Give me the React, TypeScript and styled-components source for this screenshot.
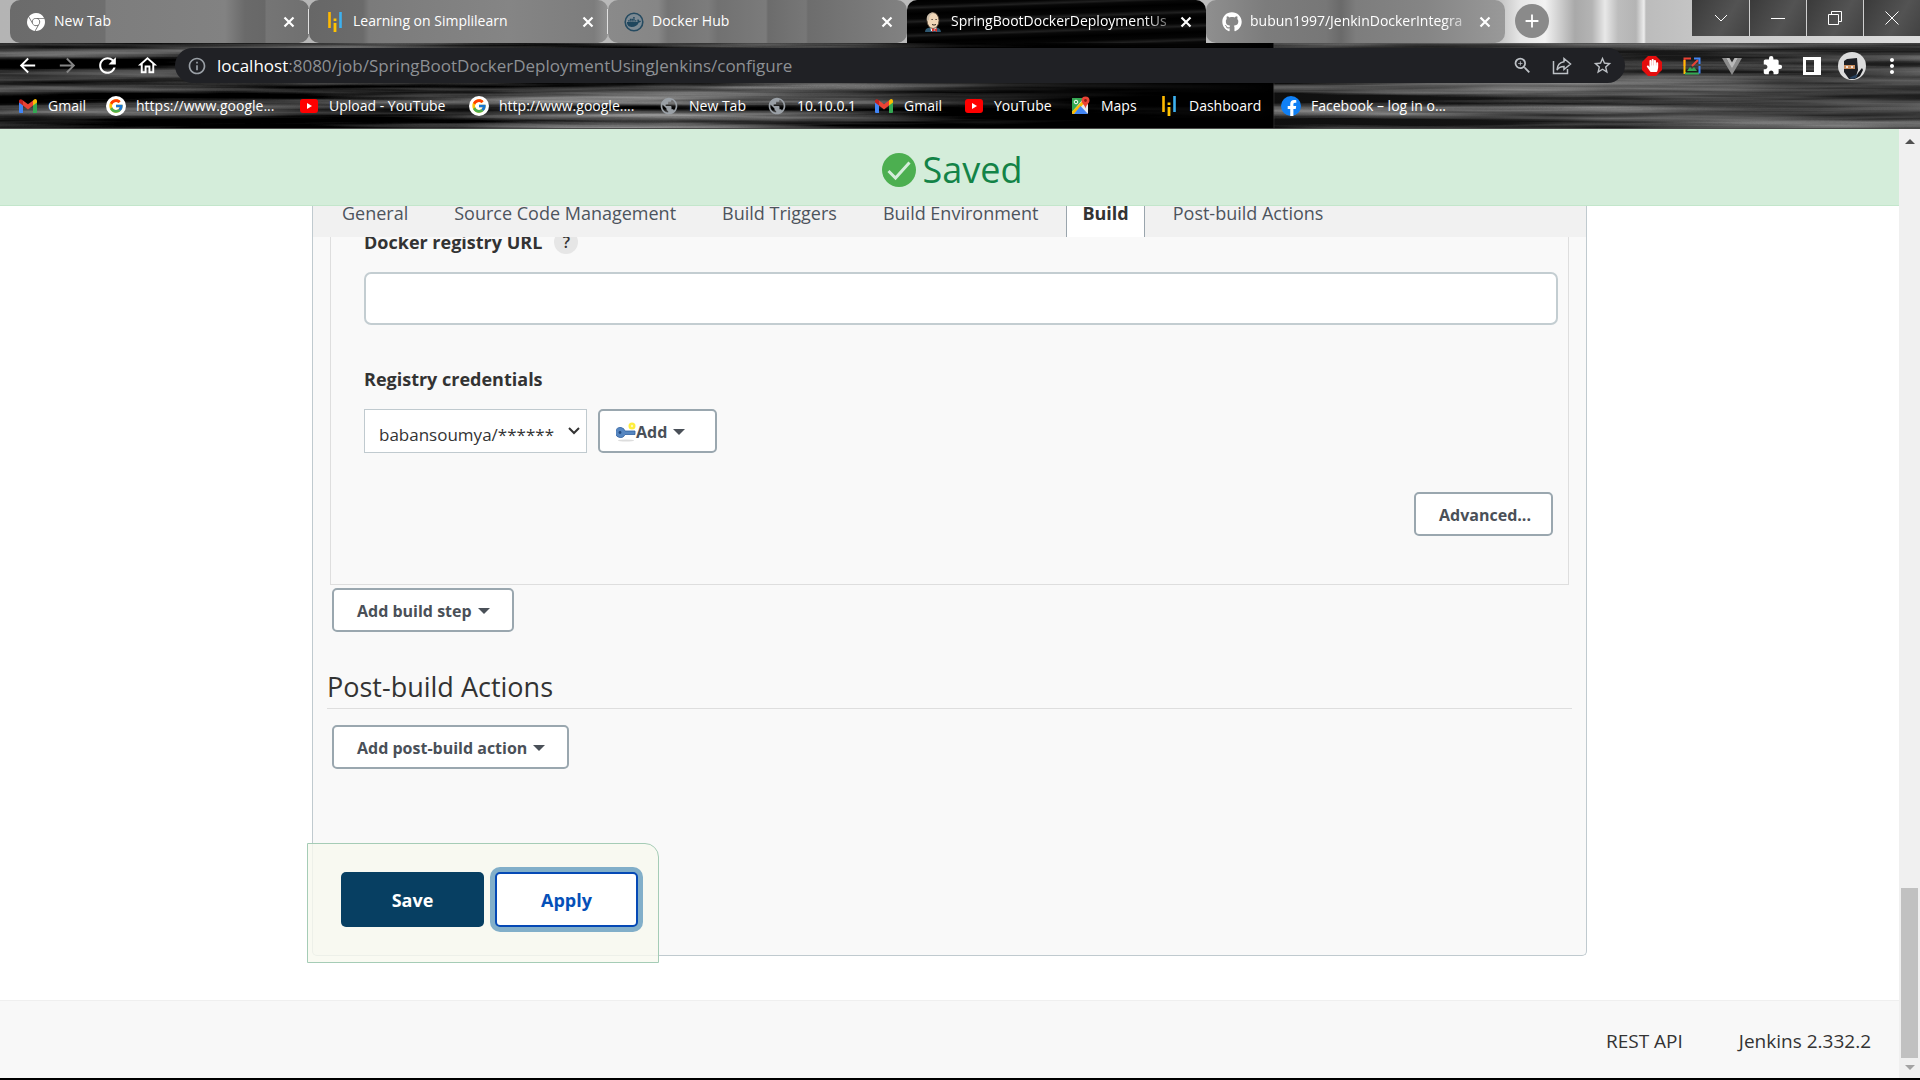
import React from 'react';
import styled, { createGlobalStyle } from 'styled-components';
import { FcGoogle } from 'react-icons/fc';
import { FaGithub, FaHandPaper, FaFacebookF, FaDocker } from 'react-icons/fa';
import { SiGooglechrome } from 'react-icons/si';
import {
  MdArrowBack,
  MdArrowForward,
  MdRefresh,
  MdOutlineHome,
  MdInfoOutline,
  MdZoomIn,
  MdStarOutline,
  MdExtension,
  MdMoreVert,
  MdPublic,
  MdAdd,
} from 'react-icons/md';

const GlobalStyle = createGlobalStyle`
  *, *::before, *::after { box-sizing: border-box; }
  body { margin: 0; background: #fff; }
  body, button, input, select {
    font-family: 'Open Sans', 'Noto Sans', 'Liberation Sans', sans-serif;
  }
  button { margin: 0; padding: 0; border: 0; background: none; color: inherit; cursor: pointer; }
  a { color: inherit; text-decoration: none; }
`;

const Window = styled.div`
  display: flex;
  flex-direction: column;
  min-height: 100vh;
  border-bottom: 2px solid #000;
`;

/* ---------- browser chrome ---------- */

const Chrome = styled.header`
  position: relative;
  isolation: isolate;
  height: 129px;
  overflow: hidden;
  color: #fff;
  background: #0a0a0a;
  border-bottom: 1px solid #4a4a4a;
`;

const Backdrop = styled.svg`
  position: absolute;
  inset: 0;
  z-index: -1;
  width: 100%;
  height: 100%;
`;

const TabStrip = styled.div`
  display: flex;
  height: 43px;
  padding-left: 10px;
  background: linear-gradient(90deg, #b4b4b4 0, #bdbdbd 1100px, #c4c4c4 1500px, #e6e6e6 1520px, #f2f2f2 1545px, #a9a9a9 1575px, #b4b4b4 1592px, #e8e8e8 1605px, #bdbdbd 1618px, #b4b4b4 1636px, #ededed 1644px, #bcbcbc 1646px, #c4c4c4 1690px, #dedede 100%);
`;

const Tab = styled.div<{ $tone: string; $active?: boolean; $divided?: boolean }>`
  position: relative;
  display: flex;
  align-items: center;
  flex: 0 1 299px;
  min-width: 0;
  height: 43px;
  padding: 0 12px 0 16px;
  border-radius: ${(p) => (p.$active ? '10px 10px 0 0' : '10px')};
  background: ${(p) => p.$tone};
  &::after {
    content: '';
    display: ${(p) => (p.$divided ? 'block' : 'none')};
    position: absolute;
    right: 0;
    top: 9px;
    width: 1px;
    height: 25px;
    background: #e0e0e0;
  }
`;

const TabIcon = styled.span`
  display: flex;
  flex: none;
  width: 20px;
  height: 20px;
  margin-right: 8px;
  align-items: center;
  justify-content: center;
`;

const TabLabel = styled.span<{ $fade?: boolean }>`
  flex: 1;
  min-width: 0;
  overflow: hidden;
  white-space: nowrap;
  font-size: 14px;
  line-height: 20px;
  padding-bottom: 1px;
  ${(p) => p.$fade && 'mask-image: linear-gradient(90deg, #000 85%, rgba(0, 0, 0, 0.15) 100%);'}
`;

const IconButton = styled.button<{ $w?: number; $color?: string }>`
  display: flex;
  flex: none;
  align-items: center;
  justify-content: center;
  width: ${(p) => p.$w ?? 40}px;
  height: 35px;
  color: ${(p) => p.$color ?? '#fff'};
`;

const NewTab = styled.button`
  display: flex;
  flex: none;
  align-items: center;
  justify-content: center;
  width: 34px;
  height: 34px;
  margin: 4px 0 0 10px;
  border-radius: 50%;
  background: #8a8a8a;
`;

const WindowButtons = styled.div`
  display: flex;
  margin-left: auto;
  height: 36px;
`;

const WindowButton = styled.button`
  width: 57px;
  height: 36px;
  display: flex;
  align-items: center;
  justify-content: center;
  background: linear-gradient(120deg, #3a3a3a, #535353 60%, #424242);
  & + & { border-left: 1px solid #cfcfcf; }
`;

const Toolbar = styled.div`
  display: flex;
  align-items: center;
  height: 40px;
  margin-top: 5px;
  padding: 0 8px 5px 7px;
`;

const Omnibox = styled.div`
  display: flex;
  align-items: center;
  flex: 1;
  height: 35px;
  margin-left: 8px;
  padding: 0 3px 0 12px;
  border-radius: 18px;
  background: #202125;
`;

const Address = styled.a`
  flex: 1;
  margin-left: 10px;
  font-size: 17px;
  line-height: 24px;
  color: #8d9094;
  b { font-weight: 400; color: #fff; }
`;

const Extensions = styled.div`
  display: flex;
  margin-left: 7px;
`;

const Bookmarks = styled.nav`
  display: flex;
  height: 36px;
  align-items: center;
  padding-left: 18px;
`;

const Bookmark = styled.a<{ $w: number }>`
  display: flex;
  flex: none;
  align-items: center;
  gap: 10px;
  width: ${(p) => p.$w}px;
  font-size: 14px;
  line-height: 20px;
  white-space: nowrap;
`;

/* ---------- page ---------- */

const Viewport = styled.div`
  display: flex;
  flex: 1;
`;

const Page = styled.div`
  display: flex;
  flex: 1;
  min-width: 0;
  flex-direction: column;
  color: #333;
`;

const Saved = styled.div`
  display: flex;
  align-items: center;
  justify-content: center;
  gap: 6px;
  height: 77px;
  padding: 6px 0 0 4px;
  border-bottom: 1px solid #c3e6cb;
  background: #d4edda;
  color: #138347;
  font-size: 36px;
  line-height: 48px;
`;

const Config = styled.main`
  position: relative;
  flex: 1;
  margin: 0 312px 44px;
  border: 1px solid #c0cacf;
  border-top: 0;
  border-radius: 0 0 5px 5px;
  background: #f9f9f9;
`;

const SectionTabs = styled.nav`
  position: relative;
  z-index: 1;
  display: flex;
  height: 31px;
  padding-left: 6px;
  background: #f1f1f1;
`;

const SectionTab = styled.a<{ $on?: boolean }>`
  height: 31px;
  padding: 0 ${(p) => (p.$on ? 15 : 23)}px;
  margin: 0 ${(p) => (p.$on ? 5 : 0)}px;
  font-size: 18px;
  line-height: 14px;
  white-space: nowrap;
  font-weight: ${(p) => (p.$on ? 700 : 400)};
  color: ${(p) => (p.$on ? '#333' : '#4d545d')};
  background: ${(p) => (p.$on ? '#fff' : 'transparent')};
  border: solid #9aa5ad;
  border-width: 0 ${(p) => (p.$on ? 1 : 0)}px;
`;

const Step = styled.section`
  margin: -12px 17px 0;
  padding: 4px 10px 48px 33px;
  border: 1px solid #dedede;
  border-top: 0;
`;

const LabelRow = styled.div`
  display: flex;
  align-items: center;
  gap: 12px;
  height: 26px;
`;

const Label = styled.label`
  font-size: 18px;
  line-height: 26px;
  font-weight: 700;
`;

const Help = styled.a`
  width: 24px;
  height: 24px;
  border-radius: 50%;
  background: #e6e6e6;
  text-align: center;
  font-size: 16px;
  line-height: 24px;
  font-weight: 600;
`;

const TextBox = styled.input`
  display: block;
  width: 100%;
  height: 53px;
  margin: 17px 0 41px;
  padding: 0 12px;
  border: 2px solid #c3cdd1;
  border-radius: 7px;
  background: #fff;
  font-size: 18px;
`;

const CredentialRow = styled.div`
  display: flex;
  gap: 11px;
  margin-top: 17px;
`;

const SelectWrap = styled.div`
  position: relative;
  svg { position: absolute; right: 6px; top: 17px; pointer-events: none; }
`;

const Select = styled.select`
  appearance: none;
  display: block;
  width: 223px;
  height: 44px;
  padding: 6px 24px 0 14px;
  border: 1px solid #c0cacf;
  border-radius: 0;
  background: #fff;
  color: #333;
  font-size: 17px;
`;

const Button = styled.button<{ $w: number; $lead?: boolean }>`
  display: flex;
  align-items: center;
  width: ${(p) => p.$w}px;
  height: 44px;
  padding: 2px 0 0 ${(p) => (p.$lead ? 16 : 23)}px;
  border: 2px solid #9aa7af;
  border-radius: 5px;
  background: #fff;
  color: #4a5058;
  font-size: 16px;
  line-height: 22px;
  font-weight: 700;
  white-space: nowrap;
`;

const Right = styled.div`
  display: flex;
  justify-content: flex-end;
  padding-right: 5px;
  margin-top: 39px;
`;

const Block = styled.section`
  padding: 3px 14px 0 19px;
`;

const Heading = styled.h2`
  margin: 36px 0 16px -5px;
  padding-bottom: 2px;
  border-bottom: 1px solid #dedede;
  font-size: 27px;
  line-height: 38px;
  font-weight: 400;
`;

const BottomBar = styled.div`
  position: absolute;
  left: -6px;
  bottom: -8px;
  display: flex;
  gap: 11px;
  width: 352px;
  height: 120px;
  padding: 28px 0 0 33px;
  border: 1px solid #a5ccb6;
  border-radius: 0 14px 0 0;
  background: rgba(247, 249, 239, 0.8);
`;

const FormButton = styled.button<{ $primary?: boolean }>`
  width: 143px;
  height: 55px;
  border-radius: 5px;
  font-size: 18px;
  line-height: 26px;
  font-weight: 700;
  color: ${(p) => (p.$primary ? '#fff' : '#0550b8')};
  background: ${(p) => (p.$primary ? '#073f62' : '#fff')};
  ${(p) => !p.$primary && 'border: 2px solid #0549b5; box-shadow: 0 0 0 5px #82afc9;'}
`;

const Footer = styled.footer`
  display: flex;
  align-items: center;
  justify-content: flex-end;
  gap: 56px;
  height: 78px;
  padding: 2px 28px 0;
  border-top: 1px solid #efefef;
  background: #f8f8f8;
  font-size: 19px;
  line-height: 24px;
`;

const Scrollbar = styled.div`
  display: flex;
  flex: none;
  flex-direction: column;
  align-items: center;
  justify-content: space-between;
  width: 21px;
  padding: 10px 0 7px;
  background: #f0f0f0;
`;

const Thumb = styled.div`
  width: 17px;
  height: 170px;
  margin: auto 0 7px;
  background: #c1c1c1;
`;

/* ---------- drawings ---------- */

const Grain = () => (
  <Backdrop aria-hidden="true">
    <defs>
      <filter id="grain" x="0" y="0" width="100%" height="100%" colorInterpolationFilters="sRGB">
        <feTurbulence type="fractalNoise" baseFrequency="0.0022 0.085" numOctaves={4} seed={11} />
        <feColorMatrix values="1.25 0 0 0 -0.44  1.25 0 0 0 -0.44  1.25 0 0 0 -0.44  0 0 0 0 1" />
      </filter>
      <linearGradient id="shade">
        <stop offset="0" stopColor="#000" stopOpacity=".25" />
        <stop offset=".3" stopColor="#000" stopOpacity="0" />
        <stop offset=".45" stopColor="#000" stopOpacity=".15" />
        <stop offset=".58" stopColor="#000" stopOpacity=".75" />
        <stop offset=".663" stopColor="#000" stopOpacity="1" />
        <stop offset=".664" stopColor="#666" stopOpacity=".15" />
        <stop offset="1" stopColor="#777" stopOpacity=".25" />
      </linearGradient>
    </defs>
    <rect width="100%" height="100%" filter="url(#grain)" />
    <rect width="100%" height="100%" fill="url(#shade)" />
  </Backdrop>
);

const CloseIcon = () => (
  <svg width="12" height="12" viewBox="0 0 12 12" stroke="#fff" strokeWidth="2.200">
    <path d="m1.500 1.500 9 9m0-9-9 9" />
  </svg>
);

const GmailIcon = () => (
  <svg width="20" height="16" viewBox="0 0 20 16">
    <path d="M1 3v11a1 1 0 0 0 1 1h3V7z" fill="#4285f4" />
    <path d="M19 3v11a1 1 0 0 1-1 1h-3V7z" fill="#34a853" />
    <path d="M15 2.5V7.6L19 4.500V3c0-2-2-2.600-3.200-1.200z" fill="#fbbc04" />
    <path d="M5 7.600V2.500L10 6.300l5-3.800v5.100L10 11.400z" fill="#ea4335" />
    <path d="M1 3v1.500L5 7.600V2.500L4.200 1.800C3 .5 1 1.200 1 3z" fill="#c5221f" />
  </svg>
);

const GoogleIcon = () => (
  <svg width="20" height="20" viewBox="0 0 20 20">
    <circle cx="10" cy="10" r="10" fill="#fff" />
    <FcGoogle x="2" y="2" size={16} />
  </svg>
);

const YouTubeIcon = () => (
  <svg width="20" height="14" viewBox="0 0 20 14">
    <rect x="1" width="18" height="14" rx="3" fill="#f00" />
    <path d="M8 4v6l5-3z" fill="#fff" />
  </svg>
);

const MapsIcon = () => (
  <svg width="20" height="20" viewBox="0 0 20 20">
    <rect x="1" y="2" width="16" height="16" rx="1.500" fill="#e8eaed" />
    <path d="M1 3a1 1 0 0 1 1-1h11L1 16z" fill="#34a853" />
    <path d="M1 15.500 13.500 3l2 2L3 18H2a1 1 0 0 1-1-1z" fill="#fbbc04" />
    <path d="M3 18 9.500 10l7.500 8z" fill="#4285f4" />
    <circle cx="5" cy="6" r="1.800" fill="none" stroke="#fff" />
    <path d="M14.500 0.500a4 4 0 0 1 4 4c0 3-3.300 4-4 8-.7-4-4-5-4-8a4 4 0 0 1 4-4z" fill="#ea4335" />
    <circle cx="14.500" cy="4.500" r="1.400" fill="#8c1d13" />
  </svg>
);

const SimplilearnIcon = () => (
  <svg width="20" height="20" viewBox="0 0 20 20">
    <path d="M4.500 0v16" stroke="#ffb900" strokeWidth="2.600" />
    <path d="M10 6.500v2.500M10 11v9" stroke="#ffc400" strokeWidth="2.800" />
    <path d="M15.500 0v16" stroke="#3db1ef" strokeWidth="2.600" />
  </svg>
);

const FacebookIcon = () => (
  <svg width="20" height="20" viewBox="0 0 20 20">
    <circle cx="10" cy="10" r="10" fill="#1080f5" />
    <FaFacebookF x="3" y="4" size={16} color="#fff" />
  </svg>
);

const DockerIcon = () => (
  <svg width="20" height="20" viewBox="0 0 20 20">
    <circle cx="10" cy="10" r="8.800" fill="#7d8a93" stroke="#254a60" strokeWidth="1.600" />
    <FaDocker x="3" y="3" size={14} color="#1f465d" />
  </svg>
);

const JenkinsIcon = () => (
  <svg width="20" height="20" viewBox="0 0 20 20">
    <path d="M2 20c0-3 2-4 5-4.500h6c3 .5 4.500 1.500 5 4.500z" fill="#2f5871" />
    <path d="M7 14h6l1 5H8z" fill="#f4f4f4" />
    <ellipse cx="10" cy="8.500" rx="6" ry="8" fill="#f0d6b7" stroke="#4d3d30" strokeWidth=".8" />
    <path d="M4 9C2.500 2 8 0 11 .5 7.500 1.500 6 4 6 8z" fill="#c9bba8" />
    <path d="M8.500 7.500h1.200M12.500 7.500h1.200M9 12.500q2 1.200 4 0" stroke="#332820" fill="none" />
    <path d="m9 16 2.500 1.500L14 16v4l-2.500-1.500L9 20z" fill="#d33833" />
  </svg>
);

const ShareIcon = () => (
  <svg width="20" height="20" viewBox="0 0 20 20" fill="none" stroke="currentColor" strokeWidth="1.500">
    <path d="M1.500 5v12.500h14V13" />
    <path d="M12 2.500 18.500 8 12 13.500v-3C8.500 10.500 6.500 11.500 5 14c.3-4.500 2.800-7.800 7-8.300z" />
  </svg>
);

const AdblockIcon = () => (
  <svg width="20" height="20" viewBox="0 0 20 20">
    <path d="M6 0h8l6 6v8l-6 6H6l-6-6V6z" fill="#e40d0d" />
    <FaHandPaper x="4" y="3" size={13} color="#fff" />
  </svg>
);

const ImageSearchIcon = () => (
  <svg width="18" height="18" viewBox="0 0 18 18" fill="none" strokeWidth="2">
    <path d="M8 1.500H1.500V9" stroke="#ea4335" />
    <path d="M1.500 3v13H3" stroke="#fbbc04" />
    <path d="M2 16.500h14" stroke="#34a853" />
    <path d="M16.500 9v7.500" stroke="#4285f4" />
    <path d="m9 9 6-6" stroke="#ea4335" />
    <path d="M11 1.500h5.500V7" stroke="#4285f4" />
    <path d="m4 14 3-4 2 2 2-2 3 4z" fill="#34a853" />
  </svg>
);

const VIcon = () => (
  <svg width="20" height="18" viewBox="0 0 20 18">
    <path d="M0 1h4l6 10 6-10h4L10 18z" fill="#8c8c8c" />
    <path d="M4 1h3.500L10 5.500 12.500 1H16l-6 10.500z" fill="#b9b9b9" />
  </svg>
);

const SidePanelIcon = () => (
  <svg width="18" height="18" viewBox="0 0 18 18">
    <path d="M0 0h18v18H0zM3 3v12h8V3z" fill="#fff" fillRule="evenodd" />
  </svg>
);

const Avatar = () => (
  <svg width="28" height="28" viewBox="0 0 28 28">
    <circle cx="14" cy="14" r="14" fill="#dcdcdc" />
    <path d="M6 9 9 7l10-1 1 12-3 9h-6l-5-7z" fill="#1d1f24" />
    <path d="M20 21l4-5 1 2-3 6-5 3z" fill="#14161a" />
    <path d="M6 13h11v4H6z" fill="#c98d5e" />
    <path d="M8 15h2m3 0h2" stroke="#fff" strokeWidth="1.500" />
    <path d="M11 26c2 1 5 1 7 0l2-4-5 2z" fill="#27415e" />
  </svg>
);

const KeyIcon = () => (
  <svg width="20" height="20" viewBox="0 0 20 20">
    <ellipse cx="10" cy="18.500" rx="8" ry="1" fill="#ddd" />
    <path d="M5 5.500a5 5 0 1 0 4 7h10V9H9a5 5 0 0 0-4-3.500z" fill="#5686c0" stroke="#2f5f9f" strokeWidth=".8" />
    <circle cx="4" cy="10.500" r="1.400" fill="#234b80" />
    <circle cx="16" cy="4" r="3.500" fill="#ffee3b" />
    <circle cx="16" cy="4" r="1.200" fill="#fff9b8" />
  </svg>
);

const Caret = styled.span`
  margin-left: 6px;
  border: 6px solid transparent;
  border-top-color: #4a5058;
  border-bottom: 0;
`;

const bookmarks: [string, number, React.ReactNode][] = [
  ['Gmail', 88, <GmailIcon />],
  ['https://www.google...', 193, <GoogleIcon />],
  ['Upload - YouTube', 170, <YouTubeIcon />],
  ['http://www.google....', 190, <GoogleIcon />],
  ['New Tab', 108, <MdPublic size={20} color="#9aa0a6" />],
  ['10.10.0.1', 107, <MdPublic size={20} color="#9aa0a6" />],
  ['Gmail', 90, <GmailIcon />],
  ['YouTube', 107, <YouTubeIcon />],
  ['Maps', 88, <MapsIcon />],
  ['Dashboard', 122, <SimplilearnIcon />],
  ['Facebook – log in o...', 180, <FacebookIcon />],
];

const tabs = [
  { label: 'New Tab', icon: <SiGooglechrome size={18} />, divided: true, tone: 'linear-gradient(90deg, #6b6b6b 0, #6f6f6f 95px, #7d7d7d 96px, #828282 215px, #6a6a6a 235px, #686868 255px, #757575 256px, #707070 100%)' },
  { label: 'Learning on Simplilearn', icon: <SimplilearnIcon />, divided: true, tone: 'linear-gradient(90deg, #676767 0, #6b6b6b 54px, #7b7b7b 60px, #858585 200px, #7d7d7d 285px, #929292 100%)' },
  { label: 'Docker Hub', icon: <DockerIcon />, tone: 'linear-gradient(90deg, #8a8a8a 0, #868686 50px, #747474 60px, #7c7c7c 100px, #717171 110px, #7b7b7b 158px, #6c6c6c 160px, #777 198px, #6d6d6d 200px, #828282 100%)' },
  { label: 'SpringBootDockerDeploymentUs', icon: <JenkinsIcon />, active: true, fade: true, tone: 'repeating-linear-gradient(178deg, #000 0, #050505 5px, #202020 8px, #080808 10px, #000 14px)' },
  { label: 'bubun1997/JenkinDockerIntegra', icon: <FaGithub size={20} />, fade: true, tone: 'linear-gradient(90deg, #8f8f8f 0, #7c7c7c 60px, #777 120px, #6a6a6a 135px, #7d7d7d 150px, #858585 220px, #999 100%)' },
];

export default function App() {
  return (
    <Window>
      <GlobalStyle />
      <Chrome>
        <Grain />
        <TabStrip>
          {tabs.map((t) => (
            <Tab key={t.label} $tone={t.tone} $active={t.active} $divided={t.divided}>
              <TabIcon>{t.icon}</TabIcon>
              <TabLabel $fade={t.fade}>{t.label}</TabLabel>
              <IconButton $w={16} aria-label="Close tab"><CloseIcon /></IconButton>
            </Tab>
          ))}
          <NewTab aria-label="New tab"><MdAdd size={22} /></NewTab>
          <WindowButtons>
            <WindowButton aria-label="Search tabs">
              <svg width="14" height="14" viewBox="0 0 14 14" fill="none" stroke="#fff"><path d="m1 4 6 6 6-6" /></svg>
            </WindowButton>
            <WindowButton aria-label="Minimize">
              <svg width="14" height="14" viewBox="0 0 14 14" fill="none" stroke="#fff"><path d="M0 7.500h14" /></svg>
            </WindowButton>
            <WindowButton aria-label="Restore">
              <svg width="14" height="14" viewBox="0 0 14 14" fill="none" stroke="#fff"><path d="M.5 3.500h10v10H.5zM3.500 3V.5h10v10H11" /></svg>
            </WindowButton>
            <WindowButton aria-label="Close window">
              <svg width="14" height="14" viewBox="0 0 14 14" fill="none" stroke="#fff"><path d="m.5.5 13 13m0-13-13 13" /></svg>
            </WindowButton>
          </WindowButtons>
        </TabStrip>
        <Toolbar>
          <IconButton aria-label="Back"><MdArrowBack size={23} /></IconButton>
          <IconButton aria-label="Forward" $color="#858585"><MdArrowForward size={23} /></IconButton>
          <IconButton aria-label="Reload"><MdRefresh size={25} /></IconButton>
          <IconButton aria-label="Home"><MdOutlineHome size={23} /></IconButton>
          <Omnibox>
            <MdInfoOutline size={20} color="#9aa0a6" />
            <Address href="#"><b>localhost</b>:8080/job/SpringBootDockerDeploymentUsingJenkins/configure</Address>
            <IconButton $color="#bdc1c6" aria-label="Zoom"><MdZoomIn size={21} /></IconButton>
            <IconButton $color="#bdc1c6" aria-label="Share"><ShareIcon /></IconButton>
            <IconButton $color="#bdc1c6" aria-label="Bookmark"><MdStarOutline size={21} /></IconButton>
          </Omnibox>
          <Extensions>
            <IconButton aria-label="AdBlock"><AdblockIcon /></IconButton>
            <IconButton aria-label="Image search"><ImageSearchIcon /></IconButton>
            <IconButton aria-label="Vue"><VIcon /></IconButton>
            <IconButton aria-label="Extensions"><MdExtension size={21} /></IconButton>
            <IconButton aria-label="Side panel"><SidePanelIcon /></IconButton>
            <IconButton aria-label="Profile"><Avatar /></IconButton>
            <IconButton aria-label="Menu"><MdMoreVert size={24} /></IconButton>
          </Extensions>
        </Toolbar>
        <Bookmarks>
          {bookmarks.map(([label, w, icon], i) => (
            <Bookmark href="#" key={i} $w={w}>{icon}{label}</Bookmark>
          ))}
        </Bookmarks>
      </Chrome>

      <Viewport>
        <Page>
          <Saved role="status">
            <svg width="36" height="36" viewBox="0 0 36 36">
              <circle cx="18" cy="18" r="17" fill="#4caf50" />
              <path d="m7.500 19 7 7L28.500 10.500" fill="none" stroke="#d4edda" strokeWidth="3" />
            </svg>
            Saved
          </Saved>
          <Config>
            <SectionTabs>
              <SectionTab href="#">General</SectionTab>
              <SectionTab href="#">Source Code Management</SectionTab>
              <SectionTab href="#">Build Triggers</SectionTab>
              <SectionTab href="#">Build Environment</SectionTab>
              <SectionTab href="#" $on>Build</SectionTab>
              <SectionTab href="#">Post-build Actions</SectionTab>
            </SectionTabs>
            <Step>
              <LabelRow>
                <Label htmlFor="registry">Docker registry URL</Label>
                <Help href="#">?</Help>
              </LabelRow>
              <TextBox id="registry" />
              <LabelRow><Label htmlFor="credentials">Registry credentials</Label></LabelRow>
              <CredentialRow>
                <SelectWrap>
                  <Select id="credentials"><option>babansoumya/******</option></Select>
                  <svg width="14" height="10" viewBox="0 0 14 10" fill="none" stroke="#333" strokeWidth="2">
                    <path d="m2 2 5 5 5-5" />
                  </svg>
                </SelectWrap>
                <Button $w={119} $lead><KeyIcon />Add<Caret /></Button>
              </CredentialRow>
              <Right><Button $w={139}>Advanced...</Button></Right>
            </Step>
            <Block>
              <Button $w={182}>Add build step<Caret /></Button>
              <Heading>Post-build Actions</Heading>
              <Button $w={237}>Add post-build action<Caret /></Button>
            </Block>
            <BottomBar>
              <FormButton $primary>Save</FormButton>
              <FormButton>Apply</FormButton>
            </BottomBar>
          </Config>
          <Footer>
            <a href="#">REST API</a>
            <a href="#">Jenkins 2.332.2</a>
          </Footer>
        </Page>
        <Scrollbar>
          <svg width="10" height="6" viewBox="0 0 10 6"><path d="M0 5 5 0l5 5z" fill="#505050" /></svg>
          <Thumb />
          <svg width="10" height="6" viewBox="0 0 10 6"><path d="M0 0h10L5 5z" fill="#a3a3a3" /></svg>
        </Scrollbar>
      </Viewport>
    </Window>
  );
}
